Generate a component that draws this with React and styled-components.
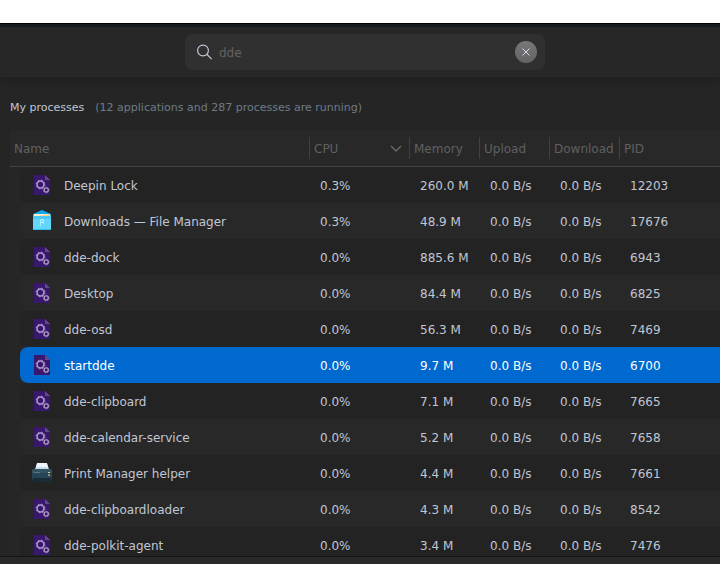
import React, { useState } from "react";
import styled, { createGlobalStyle } from "styled-components";

const columns = [
  { label: "Name" },
  { label: "CPU", width: 100, sorted: true },
  { label: "Memory", width: 70 },
  { label: "Upload", width: 70 },
  { label: "Download", width: 70 },
  { label: "PID", width: 100 },
];

const processes = [
  { name: "Deepin Lock", cpu: "0.3%", memory: "260.0 M", pid: 12203 },
  { name: "Downloads — File Manager", cpu: "0.3%", memory: "48.9 M", pid: 17676, icon: "files" },
  { name: "dde-dock", cpu: "0.0%", memory: "885.6 M", pid: 6943 },
  { name: "Desktop", cpu: "0.0%", memory: "84.4 M", pid: 6825 },
  { name: "dde-osd", cpu: "0.0%", memory: "56.3 M", pid: 7469 },
  { name: "startdde", cpu: "0.0%", memory: "9.7 M", pid: 6700 },
  { name: "dde-clipboard", cpu: "0.0%", memory: "7.1 M", pid: 7665 },
  { name: "dde-calendar-service", cpu: "0.0%", memory: "5.2 M", pid: 7658 },
  { name: "Print Manager helper", cpu: "0.0%", memory: "4.4 M", pid: 7661, icon: "printer" },
  { name: "dde-clipboardloader", cpu: "0.0%", memory: "4.3 M", pid: 8542 },
  { name: "dde-polkit-agent", cpu: "0.0%", memory: "3.4 M", pid: 7476 },
];

const ServiceIcon = () => (
  <svg width="24" height="24" viewBox="0 0 24 24" aria-hidden="true">
    <path d="M4 2h11l5 5v15H4z" fill="#39176f" />
    <path d="M15 2l5 5h-5z" fill="#62498a" />
    <g fill="none" stroke="#ab9cc6">
      <circle cx="10.500" cy="11.500" r="3.400" strokeWidth="1.500" />
      <circle cx="10.500" cy="11.500" r="4.400" strokeWidth="0.900" strokeDasharray="1.728 1.728" />
      <circle cx="16.200" cy="17" r="2.100" strokeWidth="1.300" />
      <circle cx="16.200" cy="17" r="2.900" strokeWidth="0.500" strokeDasharray="1.139 1.139" />
    </g>
  </svg>
);

const FilesIcon = () => (
  <svg width="24" height="24" viewBox="0 0 24 24" aria-hidden="true">
    <path d="M3 5l9-4 9 4v5H3z" fill="#12a9ef" />
    <path d="M4 5h16v4H4z" fill="#f4f1dc" />
    <path d="M9 7l11-2v3H9z" fill="#ffd573" />
    <path d="M3 6l1 1h16l1-1v15H3z" fill="#62d6fb" />
    <path d="M3 7h18v3H3z" fill="#4cc8f6" />
    <path d="M5 7l14-1v1z" fill="#ffd573" />
    <path d="M3 20h18v1H3z" fill="#2fc0f5" />
    <circle cx="12" cy="12" r="1.600" fill="none" stroke="#d8f7ff" />
    <path d="M10.500 12v5M13.500 12v3" stroke="#a8e9ff" />
  </svg>
);

const PrinterIcon = () => (
  <svg width="24" height="24" viewBox="0 0 24 24" aria-hidden="true">
    <path d="M5 6h14l3 4H2z" fill="#1b2c35" />
    <path d="M7 3h10l2 5H5z" fill="#c5ddec" />
    <path d="M7 2h10l1 4H6z" fill="#f0f7fc" />
    <path d="M2 9l1-1h18l1 1v9l-1 1H3l-1-1z" fill="#35525f" />
    <path d="M2 12h20v6H2z" fill="#264655" />
    <path d="M3 17h18v4H3z" fill="#182d38" />
    <path d="M4 11.500h6" stroke="#5c7885" />
    <path d="M18 11.500h2" stroke="#efc182" />
    <path d="M18 13.500h2" stroke="#4795bd" />
    <path d="M18 14.500h2" stroke="#c98f52" />
  </svg>
);

const icons = { files: FilesIcon, printer: PrinterIcon };

const App = () => {
  const [keyword, setKeyword] = useState("dde");
  const [selected, setSelected] = useState(6700);

  return (
    <>
      <GlobalStyle />
      <Page>
        <Window>
          <Toolbar>
            <SearchBox>
              <svg width="16" height="16" viewBox="0 0 16 16" fill="none" stroke="#c0c6d4" strokeWidth="1.200" aria-hidden="true">
                <circle cx="6" cy="6.500" r="5.400" />
                <path d="M10 10.500l4.700 4.700" />
              </svg>
              <SearchInput
                aria-label="Search"
                value={keyword}
                onChange={(e) => setKeyword(e.target.value)}
              />
              <ClearButton aria-label="Clear" onClick={() => setKeyword("")}>
                <svg width="8" height="8" viewBox="0 0 8 8" stroke="#d5dbea" aria-hidden="true">
                  <path d="M0.500 0.500l7 7M7.500 0.500l-7 7" />
                </svg>
              </ClearButton>
            </SearchBox>
          </Toolbar>
          <Content>
            <Summary>
              <Title>My processes</Title>
              <Count>(12 applications and 287 processes are running)</Count>
            </Summary>
            <TableWrap>
              <Table>
                <colgroup>
                  {columns.map((c) => (
                    <col key={c.label} width={c.width} />
                  ))}
                </colgroup>
                <thead>
                  <tr>
                    {columns.map((c) => (
                      <HeadCell key={c.label}>
                        <HeadLabel>
                          {c.label}
                          {c.sorted && (
                            <svg width="12" height="8" viewBox="0 0 12 8" fill="none" stroke="#696a6d" strokeWidth="1.300" aria-hidden="true">
                              <path d="M1 1l5 5 5-5" />
                            </svg>
                          )}
                        </HeadLabel>
                      </HeadCell>
                    ))}
                  </tr>
                </thead>
                <tbody>
                  {processes.map((p) => {
                    const Icon = icons[p.icon] || ServiceIcon;
                    return (
                      <Row key={p.pid} $selected={p.pid === selected} onClick={() => setSelected(p.pid)}>
                        <NameCell>
                          <Name>
                            <Icon />
                            <NameText>{p.name}</NameText>
                          </Name>
                        </NameCell>
                        <Cell>{p.cpu}</Cell>
                        <Cell>{p.memory}</Cell>
                        <Cell>0.0 B/s</Cell>
                        <Cell>0.0 B/s</Cell>
                        <Cell>{p.pid}</Cell>
                      </Row>
                    );
                  })}
                </tbody>
              </Table>
            </TableWrap>
          </Content>
          <BottomEdge />
        </Window>
      </Page>
    </>
  );
};

const GlobalStyle = createGlobalStyle`
  * {
    box-sizing: border-box;
  }

  body {
    margin: 0;
    background: #fff;
    font-family: "DejaVu Sans", sans-serif;
    font-size: 12px;
  }
`;

const Page = styled.div`
  height: 100vh;
  padding-top: 23px;
  overflow: hidden;
`;

const Window = styled.main`
  display: flex;
  flex-direction: column;
  height: 100%;
  overflow: hidden;
  background: #252525;
  border-top: 1px solid #000;
`;

const Toolbar = styled.header`
  flex: none;
  display: flex;
  justify-content: center;
  padding: 7px 0;
  background: #272727;
  border-top: 3px solid #151b1e;
  box-shadow: 0 2px 12px rgba(0, 0, 0, 0.2);
`;

const SearchBox = styled.div`
  display: flex;
  align-items: center;
  gap: 4px;
  width: 50%;
  height: 36px;
  padding: 0 8px 0 12px;
  margin-left: 10px;
  border-radius: 8px;
  background: #303030;
`;

const SearchInput = styled.input`
  flex: 1;
  min-width: 0;
  padding: 2px 2px 0;
  border: 0;
  outline: 0;
  background: none;
  color: #636363;
  font: inherit;
`;

const ClearButton = styled.button`
  display: flex;
  align-items: center;
  justify-content: center;
  width: 22px;
  height: 22px;
  padding: 0;
  border: 0;
  border-radius: 50%;
  background: linear-gradient(#787878, #636363);
`;

const Content = styled.section`
  flex: 1;
  min-height: 0;
  display: flex;
  flex-direction: column;
  padding-left: 10px;
`;

const Summary = styled.div`
  display: flex;
  align-items: center;
  gap: 11px;
  padding: 23px 0 14px;
  font-size: 11px;
  line-height: 16px;
`;

const Title = styled.span`
  color: #c0c6d4;
`;

const Count = styled.span`
  color: #6d7c88;
`;

const TableWrap = styled.div`
  flex: 1;
  min-height: 0;
  overflow: hidden;
  background: #262626;
`;

const Table = styled.table`
  width: 100%;
  table-layout: fixed;
  border-spacing: 0;
`;

const HeadCell = styled.th`
  height: 37px;
  padding: 0;
  background: #282828;
  border-bottom: 1px solid #414141;
  color: #5f6062;
  font-weight: 400;
  text-align: left;
`;

const HeadLabel = styled.div`
  display: flex;
  align-items: center;
  justify-content: space-between;
  height: 22px;
  padding: 2px 7px 0 4px;
  border-right: 1px solid #414141;

  ${HeadCell}:last-child & {
    border-right: 0;
  }
`;

const Cell = styled.td`
  height: 36px;
  padding: 2px 0 0 10px;
  white-space: nowrap;
`;

const NameCell = styled(Cell)`
  && {
    padding-top: 0;
  }
`;

const Name = styled.div`
  display: flex;
  align-items: center;
  gap: 10px;
  height: 36px;
  padding-left: 10px;
  border-radius: 8px 0 0 8px;
`;

const NameText = styled.span`
  padding-top: 2px;
`;

const Row = styled.tr`
  color: ${({ $selected }) => ($selected ? "#fff" : "#c0c6d4")};

  ${Cell}, ${Name} {
    background: ${({ $selected }) => ($selected ? "#0069cf" : "#232323")};
  }

  &:nth-child(even) ${Cell}, &:nth-child(even) ${Name} {
    background: ${({ $selected }) => ($selected ? "#0069cf" : "#282828")};
  }

  &&& ${NameCell} {
    background: none;
  }
`;

const BottomEdge = styled.footer`
  flex: none;
  height: 8px;
  background: #292929;
  border-top: 1px solid #141414;
`;

export default App;
